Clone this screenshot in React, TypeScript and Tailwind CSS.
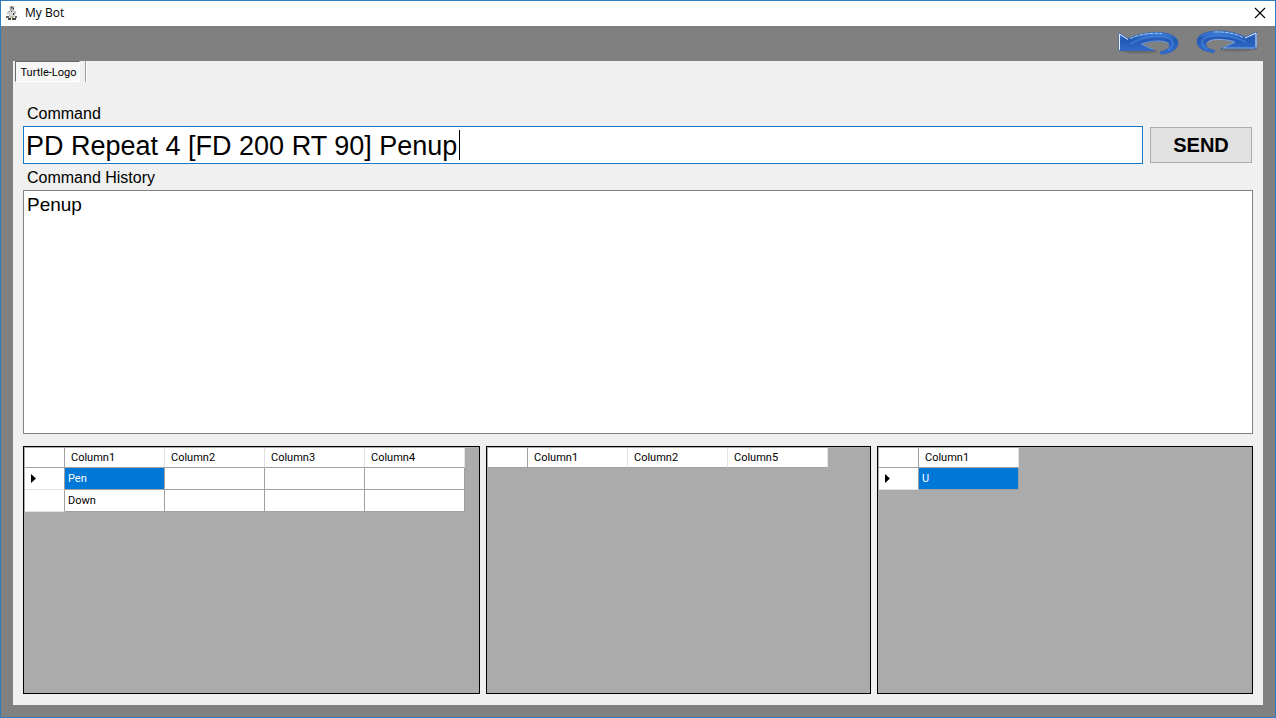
import { useState } from 'react'

type Grid = { label: string; columns: string[]; rows: string[][] }

const grids: Grid[] = [
  {
    label: 'Tokens',
    columns: ['Column1', 'Column2', 'Column3', 'Column4'],
    rows: [['Pen', '', '', ''], ['Down', '', '', '']],
  },
  { label: 'Arguments', columns: ['Column1', 'Column2', 'Column5'], rows: [] },
  { label: 'Output', columns: ['Column1'], rows: [['U']] },
]

export default function App() {
  const [command, setCommand] = useState('PD Repeat 4 [FD 200 RT 90] Penup')
  const [history, setHistory] = useState('Penup')

  return (
    <div className="flex min-h-screen flex-col border border-[#2f7dbf] bg-[#808080] font-['Liberation_Sans',Arial,sans-serif] text-black">
      {/* title bar */}
      <header className="flex h-[25px] items-center bg-white pb-px pl-[3px] pr-2">
        <BotIcon />
        <h1 className="ml-[5px] flex-1 font-['Open_Sans','Noto_Sans',sans-serif] text-[12px] leading-4">My Bot</h1>
        <button type="button" aria-label="Close" className="p-px">
          <svg width="12" height="12" viewBox="0 0 12 12" stroke="#000" strokeWidth="1.1" fill="none">
            <path d="M1 1l10 10M11 1L1 11" />
          </svg>
        </button>
      </header>

      {/* undo / redo */}
      <div className="flex h-[35px] items-start justify-end gap-4 pr-[17px] pt-1">
        <button type="button" aria-label="Undo"><UndoArrow /></button>
        <button type="button" aria-label="Redo"><RedoArrow /></button>
      </div>

      <main className="mx-3 mb-3 flex flex-1 flex-col bg-[#f0f0f0] pb-[11px]">
        <div className="flex h-[21px] pl-0.5">
          <button type="button" className="mr-[5px] w-[65px] whitespace-nowrap border border-b-white border-l-[#696969] border-r-white border-t-[#696969] bg-[#f7f7f7] pl-0.5 pt-0.5 font-[Roboto,sans-serif] text-[11px] leading-4">
            Turtle-Logo
          </button>
          <div className="w-0.5 border-l border-[#a0a0a0] bg-white" />
        </div>

        <div className="flex flex-1 flex-col px-2.5 pt-[21px]">
          <label htmlFor="command" className="pb-px pl-1 text-[16px] leading-[22px]">Command</label>
          <div className="flex items-center gap-[7px] pr-px">
            <div className="relative flex-1">
              <input
                id="command"
                value={command}
                onChange={(e) => setCommand(e.target.value)}
                className="block h-[38px] w-full border border-[#1a78c8] bg-white px-0.5 pt-0.5 text-[27px] caret-transparent outline-none"
              />
              <span className="absolute left-[436px] top-1 h-[30px] w-px bg-black" />
            </div>
            <button
              type="button"
              onClick={() => setHistory(`${history}\n${command}`)}
              className="h-9 w-[102px] border border-[#adadad] bg-[#e1e1e1] text-[20px] font-bold"
            >
              SEND
            </button>
          </div>

          <label htmlFor="history" className="pb-px pl-1 pt-[3px] text-[16px] leading-[22px]">Command History</label>
          <textarea
            id="history"
            readOnly
            value={history}
            className="block h-[244px] resize-none border border-[#828282] bg-white p-[3px] text-[19px] leading-[22px] outline-none"
          />

          <div className="mt-3 grid flex-1 grid-cols-[457fr_385fr_376fr] gap-1.5">
            {grids.map((grid) => <DataGrid key={grid.label} {...grid} />)}
          </div>
        </div>
      </main>
    </div>
  )
}

function DataGrid({ label, columns, rows }: Grid) {
  return (
    <div className="overflow-hidden border border-black bg-[#ababab] p-px">
      <table aria-label={label} className="w-max table-fixed border-separate border-spacing-0 bg-white font-[Roboto,sans-serif] text-[11px] leading-4">
        <thead>
          <tr className="h-5">
            <th className="w-10 border-b border-r border-[#a0a0a0] p-0" />
            {columns.map((column) => (
              <th key={column} className="w-[100px] border-b border-r border-b-[#a0a0a0] border-r-[#e2e2e2] p-0 pl-1.5 text-left font-normal">
                {column}
              </th>
            ))}
          </tr>
        </thead>
        <tbody>
          {rows.map((row, r) => (
            <tr key={r} className="h-[22px]">
              <th className="w-10 border-b border-r border-b-[#e2e2e2] border-r-[#a0a0a0] p-0 pl-1.5">
                {r === 0 && (
                  <svg width="5" height="9" viewBox="0 0 5 9"><path d="M0 0l5 4.5L0 9z" /></svg>
                )}
              </th>
              {row.map((cell, c) => (
                <td
                  key={c}
                  className={`border-b border-r border-[#a0a0a0] p-0 pl-[3px] ${r === 0 && c === 0 ? 'bg-[#0078d7] text-white' : ''}`}
                >
                  {cell}
                </td>
              ))}
            </tr>
          ))}
        </tbody>
      </table>
    </div>
  )
}

function BotIcon() {
  return (
    <svg width="16" height="16" viewBox="0 0 16 16" fill="none">
      <path d="M6.500 1h3l1 2-1 2h-3l-1-2z" fill="#999" />
      <path d="M5 6l2-1h3l1 3-1 4H6L5 9z" fill="#dadada" stroke="#999" strokeWidth=".6" />
      <path d="M7 2h1v1H7zM9 3h1v1H9zM7 6h1v1H7zM9 8h1v2H9z" fill="#333" />
      <path d="M5 6L3 9M11 6l1 3" stroke="#aaa" />
      <path d="M2 11h3v2H2zM11 11h2v2h-2z" fill="#666" />
      <path d="M4 13h3v2H4zM8 13h4v2H8z" fill="#444" />
      <path d="M6 12h3v1H6z" fill="#b5b06a" />
    </svg>
  )
}

function UndoArrow() {
  return (
    <svg width="62" height="26" viewBox="0 0 62 26" fill="none">
      <defs>
        <linearGradient id="arrow-fill" x1="0" y1="0" x2="0" y2="1">
          <stop offset="0" stopColor="#3f83dc" />
          <stop offset=".35" stopColor="#2458b4" />
          <stop offset="1" stopColor="#3470d0" />
        </linearGradient>
      </defs>
      <path d="M2 21h38v1l-10 1.500H12z" fill="#555" opacity=".45" />
      <path
        d="M1 3l9 5.500C20 4 31 2 41 2.500 53 3 60 7 60 13c0 6-7 10.500-17 11l-1-2c8-2 11-5 9-8-3-4-15-4-28 0l14 6.500H1z"
        fill="url(#arrow-fill)"
        stroke="#2a5fb5"
        strokeWidth=".8"
      />
      <path d="M12 14C26 6 44 4 52 9c5 3 3 8-2 11" stroke="#4b8ae2" strokeWidth="2" opacity=".55" />
      <path d="M1.500 20V4l8.500 5.500" stroke="#e4efff" />
      <path d="M12 8.500C22 4 34 2.500 44 3.500" stroke="#9cc8f5" strokeDasharray="4 1" />
      <path d="M23 14l12 5.500M24 13.500c12-3.500 23-3.500 27 .5" stroke="#86aee6" strokeWidth=".7" />
    </svg>
  )
}

function RedoArrow() {
  return (
    <svg width="62" height="26" viewBox="0 0 62 26" fill="none">
      <path d="M22 19h38v1l-12 1.500H30z" fill="#555" opacity=".45" />
      <path
        d="M60.500 2L49 7C41 3 32 1 23 1 9 1 1 5 1 11.500 1 17 7 22 18 22.500l1-2c-8-1.500-11-4.500-8-8 3-4 14-4.500 28-.5l-14 6.500h35.500z"
        fill="url(#arrow-fill)"
        stroke="#2a5fb5"
        strokeWidth=".8"
      />
      <path d="M50 12C36 5 17 3 9 8c-5 3-3 8 2 11" stroke="#4b8ae2" strokeWidth="2" opacity=".55" />
      <path d="M60 17.500V3L49 8" stroke="#e4efff" />
      <path d="M47 7.500C38 3 28 1.500 17 2" stroke="#9cc8f5" strokeDasharray="4 1" />
      <path d="M39 12l-12 6h32M38 11.500c-12-3-24-3-27 1.500" stroke="#a5c3ec" strokeWidth=".7" />
    </svg>
  )
}
